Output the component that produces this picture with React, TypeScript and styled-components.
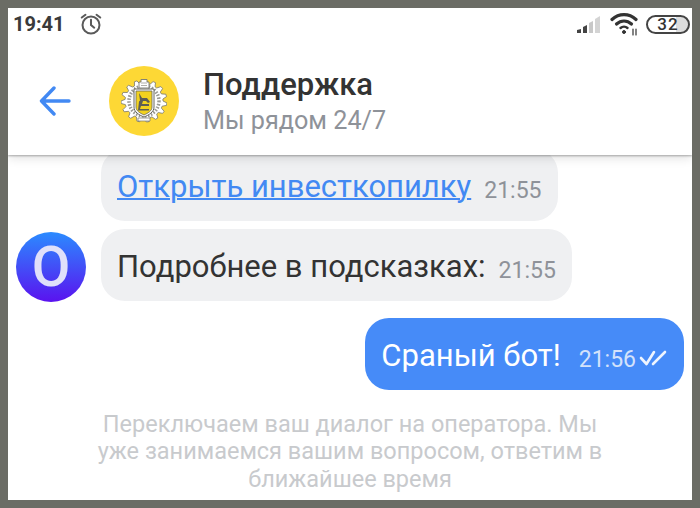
import React from "react";
import styled, {createGlobalStyle} from "styled-components";

const Global = createGlobalStyle`
  html, body {
    margin: 0;
    padding: 0;
    background: #6b6c65;
  }
  * {
    box-sizing: border-box;
  }
`

// gear outline of the crest, teeth all around
const gearPath = () => {
    const teeth = 15
    let d = ""
    for (let i = 0; i < teeth; i++) {
        const step = (Math.PI * 2) / teeth
        const a = i * step
        const pts: [number, number][] = [
            [a, 19], [a + step * 0.22, 23], [a + step * 0.5, 23], [a + step * 0.72, 19],
        ]
        pts.forEach(([ang, r]) => {
            const x = (23 + Math.cos(ang) * r).toFixed(1)
            const y = (23 + Math.sin(ang) * r * 0.92).toFixed(1)
            d += `${d ? "L" : "M"}${x} ${y}`
        })
    }
    return d + "z"
}

const Crest = () => (
    <svg width="46" height="46" viewBox="0 0 46 46">
        <path d={gearPath()} fill="#fff" stroke="#77776f" strokeWidth="0.8"/>
        <circle cx="23" cy="23" r="15" fill="none" stroke="#9a9a94" strokeWidth="3.5" strokeDasharray="1.5 1.5"/>
        <path d="M18 10V4h2V1.500h6V4h2v6z" fill="#fff" stroke="#77776f" strokeWidth="0.9"/>
        <path d="M20 5h6M20 7.500h6" stroke="#9a9a94" strokeWidth="0.8"/>
        <path d="M13 11h20v18c0 5-5 8-10 10-5-2-10-5-10-10z" fill="#fff" stroke="#66665f" strokeWidth="1"/>
        <path d="M15 13h16v16c0 4-4 6-8 8-4-2-8-4-8-8z" fill="#f2d21f" stroke="#66665f" strokeWidth="0.8"/>
        <path d="M18 15l3 5h5l3 4-2 1-2-2h-3l-1 3h7v2h-8l-1 3h9v1.500H17l1-9 1-1z" fill="#5d5d55"/>
        <path d="M17 40h12v3H17z" fill="#fff" stroke="#77776f" strokeWidth="0.7"/>
    </svg>
)

const App = () => {
    return (
        <Screen>
            <Global/>
            <StatusBar>
                <Clock>19:41</Clock>
                <svg width="24" height="24" viewBox="0 0 26 26" fill="none" stroke="#5a5a5a" strokeWidth="2.200" strokeLinecap="round">
                    <circle cx="13" cy="14" r="9.200"/>
                    <path d="M13 8.500V14l3.500 3"/>
                    <path d="M3 6l4-3M23 6l-4-3"/>
                </svg>
                <StatusRight>
                    <svg width="26" height="20" viewBox="-2 0 26 20">
                        <path d="M1 19v-3l4-1v4z" fill="#444"/>
                        <path d="M7 19v-6l4-2v8z" fill="#444"/>
                        <path d="M13 19V9l4-2v12z" fill="#c8c8c8"/>
                        <path d="M19 19V5l5-3v17z" fill="#d4d4d4"/>
                    </svg>
                    <svg width="30" height="24" viewBox="-2 0 30 24" fill="none" stroke="#333" strokeWidth="3.200" strokeLinecap="round">
                        <path d="M2 7.500c7-6.500 17-6.500 24 0"/>
                        <path d="M6.500 12c4.500-4 10.500-4 15 0"/>
                        <path d="M10.500 16c2-1.800 5-1.800 7 0" strokeWidth="2.400"/>
                        <circle cx="14" cy="20" r="1.500" fill="#333" strokeWidth="1"/>
                        <path d="M23 17v6M26 17v6" strokeWidth="1.200"/>
                    </svg>
                    <Battery><BatteryLabel>32</BatteryLabel></Battery>
                </StatusRight>
            </StatusBar>
            <Header>
                <BackBtn>
                    <svg width="32" height="30" viewBox="0 0 32 30" fill="none" stroke="#4289f3" strokeWidth="3.400" strokeLinecap="round" strokeLinejoin="round">
                        <path d="M30 15H3M15 2L2.500 15 15 28"/>
                    </svg>
                </BackBtn>
                <Logo><Crest/></Logo>
                <HeaderText>
                    <Title>Поддержка</Title>
                    <Subtitle>Мы рядом 24/7</Subtitle>
                </HeaderText>
            </Header>
            <Messages>
                <Row>
                    <Bubble>
                        <BubbleLink>Открыть инвесткопилку</BubbleLink>
                        <Time>21:55</Time>
                    </Bubble>
                </Row>
                <Row>
                    <Avatar>О</Avatar>
                    <Bubble>
                        Подробнее в подсказках:
                        <Time>21:55</Time>
                    </Bubble>
                </Row>
                <Row mine>
                    <Bubble mine>
                        Сраный бот!
                        <Time mine>21:56</Time>
                        <Ticks width="28" height="16" viewBox="0 0 28 16" fill="none" stroke="#eef4fe" strokeWidth="2.600" strokeLinecap="round" strokeLinejoin="round">
                            <path d="M2 8l5.500 6L15 2"/>
                            <path d="M14 14L26 2"/>
                        </Ticks>
                    </Bubble>
                </Row>
                <Notice>
                    Переключаем ваш диалог на оператора. Мы уже занимаемся вашим вопросом, ответим в ближайшее время
                </Notice>
            </Messages>
        </Screen>
    )
}

export default App

const Screen = styled.div`
  width: 684px;
  height: 492px;
  margin: 8px;
  background: #fff;
  display: flex;
  flex-direction: column;
  overflow: hidden;
  font-family: Roboto, sans-serif;
  color: #333;
`
const StatusBar = styled.div`
  height: 39px;
  padding: 0 2px 7px 5px;
  display: flex;
  align-items: center;
  gap: 14px;
  flex: none;
  background: #fff;
  position: relative;
  z-index: 2;
`
const Clock = styled.span`
  font-size: 20px;
  font-weight: 700;
  color: #3a3a3a;
`
const StatusRight = styled.div`
  margin-left: auto;
  display: flex;
  align-items: center;
  gap: 8px;
`
const Battery = styled.div`
  width: 44px;
  height: 19px;
  border: 2px solid #444;
  border-radius: 10px;
  background: linear-gradient(90deg, #fff 70%, #ddd 70%);
  display: flex;
  align-items: center;
  justify-content: center;
`
const BatteryLabel = styled.span`
  font-size: 17px;
  font-weight: 500;
  letter-spacing: 1px;
  color: #333;
`
const Header = styled.div`
  height: 108px;
  flex: none;
  display: flex;
  align-items: center;
  padding-left: 31px;
  background: #fff;
  box-shadow: 0 1px 2px rgba(0, 0, 0, 0.3), 0 3px 10px rgba(0, 0, 0, 0.12);
  position: relative;
  z-index: 1;
`
const BackBtn = styled.div`
  width: 32px;
  height: 30px;
  margin-right: 38px;
`
const Logo = styled.div`
  width: 70px;
  height: 70px;
  border-radius: 50%;
  background: #fdd835;
  display: flex;
  align-items: center;
  justify-content: center;
  margin-right: 24px;
`
const HeaderText = styled.div`
  padding-top: 4px;
`
const Title = styled.div`
  font-size: 31px;
  font-weight: 500;
  line-height: 36px;
  color: #333;
`
const Subtitle = styled.div`
  font-size: 25.200px;
  line-height: 36px;
  color: #8e9299;
`
const Messages = styled.div`
  flex: 1;
  min-height: 0;
  display: flex;
  flex-direction: column;
  justify-content: flex-end;
  overflow: hidden;
  padding: 0 8px 7px 8px;
`
const Row = styled.div<{ mine?: boolean }>`
  display: flex;
  align-items: center;
  justify-content: ${props => props.mine ? "flex-end" : "flex-start"};
  padding-left: ${props => props.mine ? 0 : 85}px;
  margin-bottom: ${props => props.mine ? 21 : 8}px;
  margin-top: ${props => props.mine ? 9 : 0}px;
  position: relative;
`
const Bubble = styled.div<{ mine?: boolean }>`
  flex: none;
  height: 72px;
  padding: 3px ${props => props.mine ? 17 : 16}px 0 16px;
  border-radius: 24px;
  display: flex;
  align-items: center;
  font-size: 31px;
  white-space: nowrap;
  background: ${props => props.mine ? "#468bf8" : "#eff0f2"};
  color: ${props => props.mine ? "#fff" : "#333"};
`
const BubbleLink = styled.span`
  color: #4289f3;
  text-decoration: underline;
  text-decoration-thickness: 2px;
`
const Time = styled.span<{ mine?: boolean }>`
  font-size: 23px;
  margin-left: ${props => props.mine ? 18 : 13}px;
  margin-top: 8px;
  color: ${props => props.mine ? "#d3e2fb" : "#8e9299"};
`
const Ticks = styled.svg`
  margin-left: 3px;
  margin-top: 6px;
  flex: none;
`
const Avatar = styled.div`
  position: absolute;
  left: 0;
  margin-top: 5px;
  width: 70px;
  height: 70px;
  border-radius: 50%;
  background: linear-gradient(180deg, #2b8bff, #5a12ef);
  color: #e0e0fa;
  font-size: 56px;
  font-weight: 500;
  display: flex;
  align-items: center;
  justify-content: center;
`
const Notice = styled.div`
  padding: 0 75px;
  text-align: center;
  font-size: 23.500px;
  line-height: 27.500px;
  color: #c8cacd;
`
